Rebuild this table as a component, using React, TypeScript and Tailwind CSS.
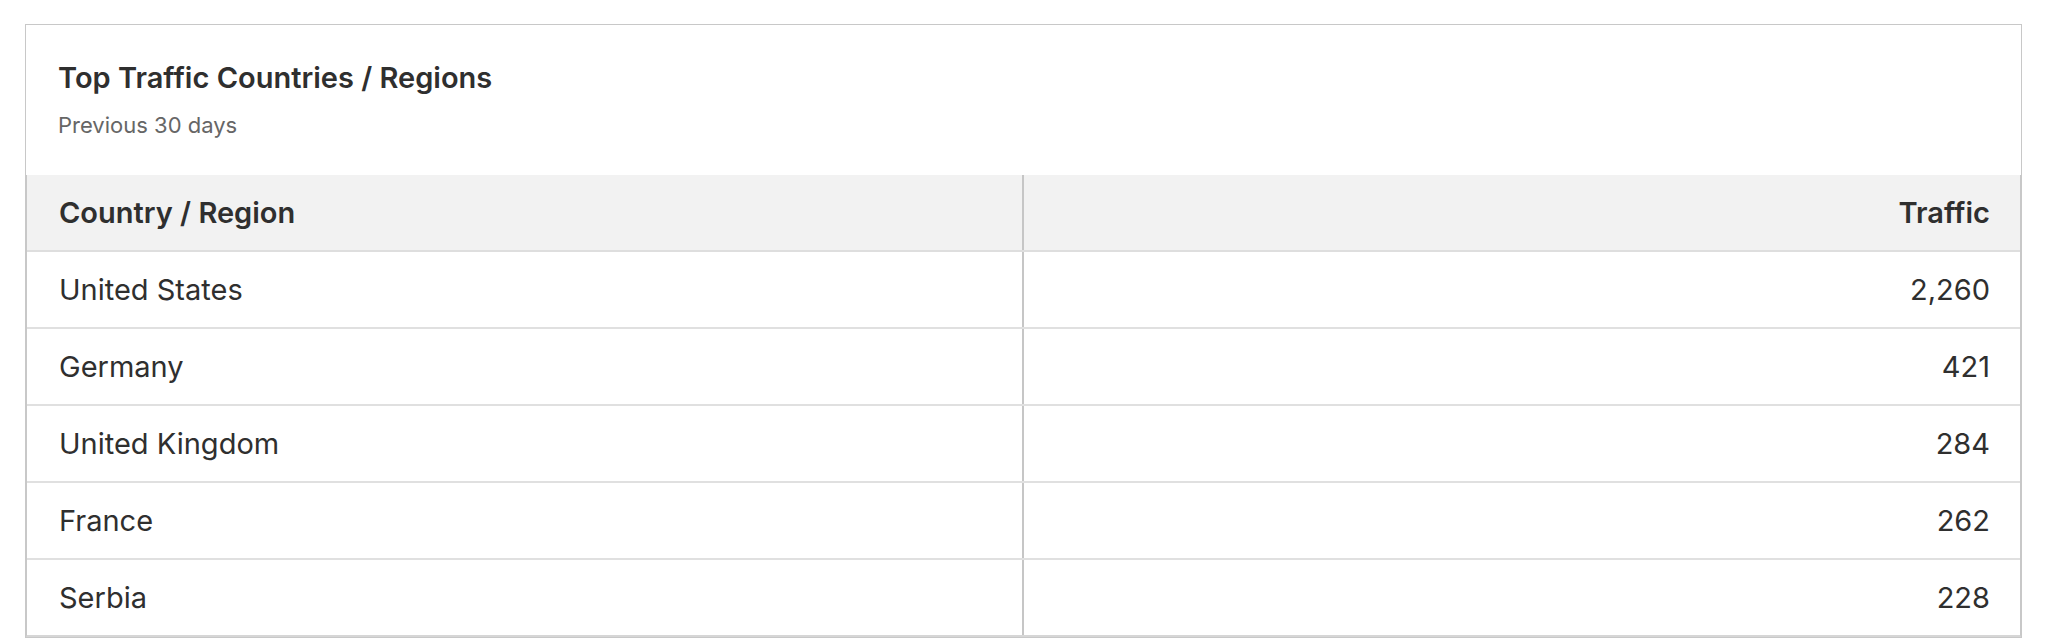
import React from "react";

const rows: [string, string][] = [
  ["United States", "2,260"],
  ["Germany", "421"],
  ["United Kingdom", "284"],
  ["France", "262"],
  ["Serbia", "228"],
];

export default function App() {
  return (
    <div
      className="min-h-screen bg-white pt-[24px] pl-[25px] pr-[26px] text-[#2f2f2f]"
      style={{ fontFamily: "Inter, 'Noto Sans', sans-serif" }}
    >
      <div className="border border-[#c8c8c8] bg-white">
        <div className="pl-8 pr-8 pt-[35px] pb-9">
          <h2 className="text-[29px] leading-[35px] font-semibold text-[#2f2f2f]">
            Top Traffic Countries / Regions
          </h2>
          <p className="mt-[17px] text-[22px] leading-[27px] text-[#666666]">Previous 30 days</p>
        </div>
        <div className="border-x border-b-2 border-[#c8c8c8] border-b-[#d6d6d6]">
          <div className="grid grid-cols-2 bg-[#f2f2f2] border-b-2 border-[#dedede]">
            <div className="h-[75px] flex items-center pl-8 pr-8 border-r-2 border-[#c6c6c6] text-[29px] font-semibold">
              Country / Region
            </div>
            <div className="h-[75px] flex items-center justify-end pl-8 pr-[30px] text-[29px] font-semibold">
              Traffic
            </div>
          </div>
          {rows.map(([name, value], i) => (
            <div
              key={name}
              className={
                i < rows.length - 1
                  ? "grid grid-cols-2 border-b-2 border-[#e0e0e0]"
                  : "grid grid-cols-2"
              }
            >
              <div className="h-[75px] flex items-center pl-8 pr-8 border-r-2 border-[#c6c6c6] text-[29px]">
                {name}
              </div>
              <div className="h-[75px] flex items-center justify-end pl-8 pr-[30px] text-[29px]">
                {value}
              </div>
            </div>
          ))}
        </div>
      </div>
    </div>
  );
}
